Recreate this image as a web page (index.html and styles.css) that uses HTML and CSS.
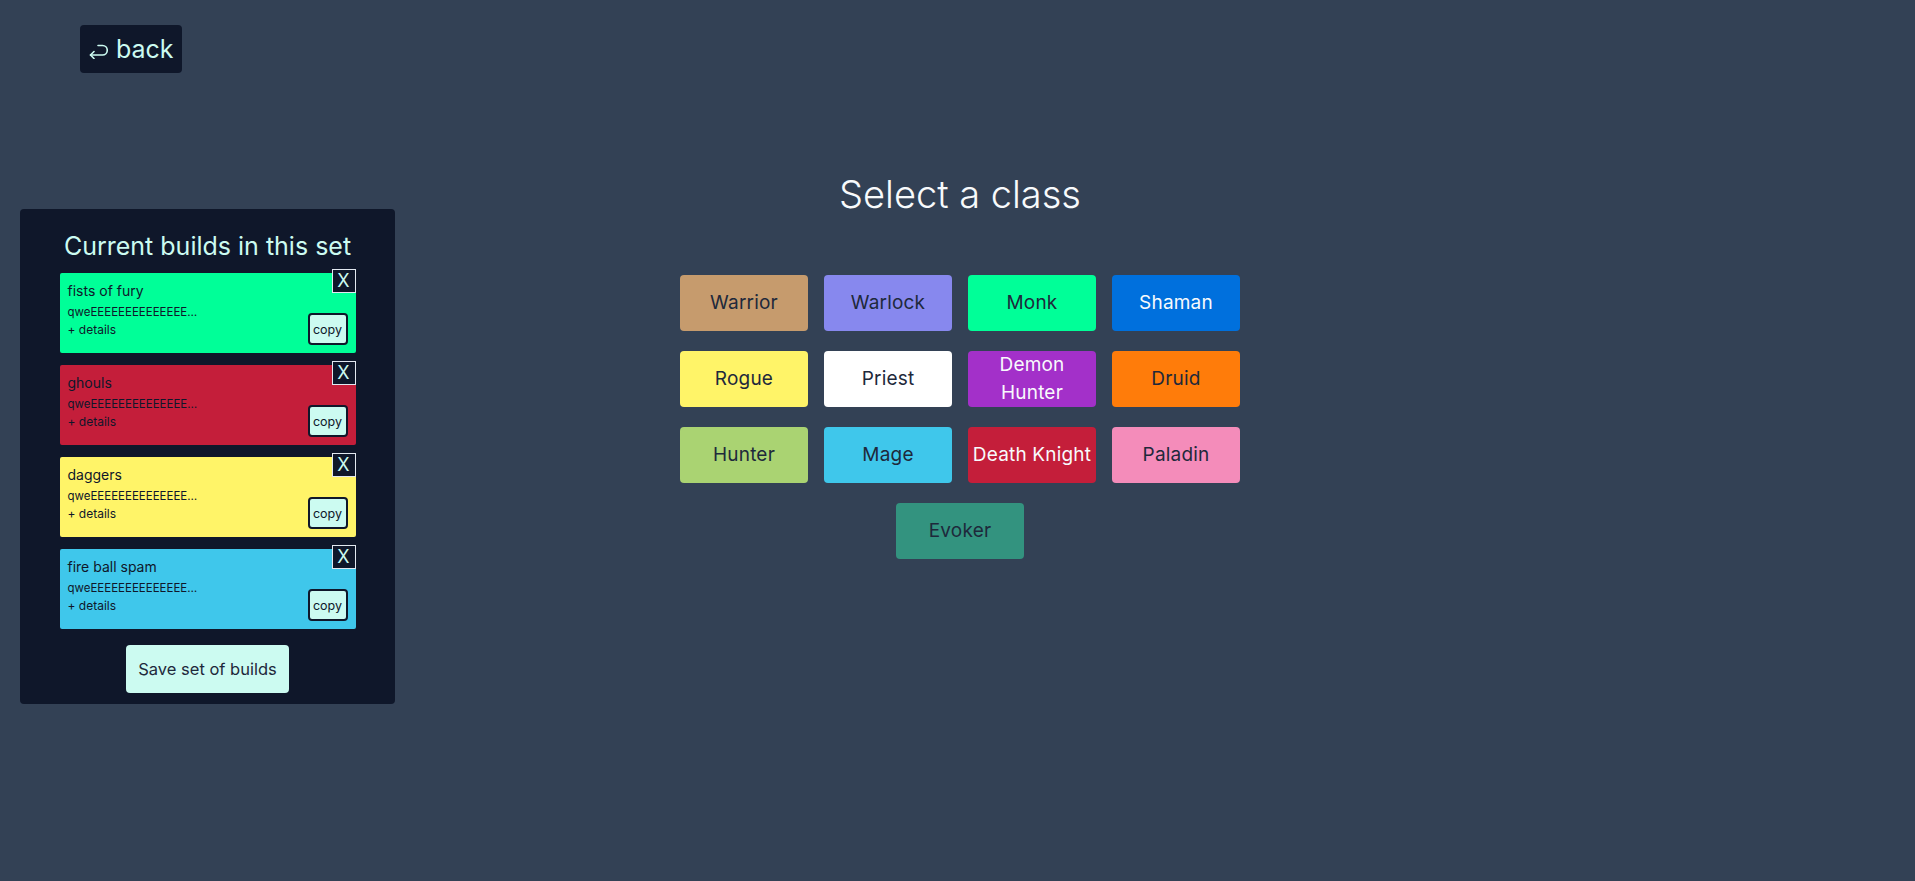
FILE: index.html
```html
<!DOCTYPE html>
<html lang="en">
<head>
<meta charset="utf-8">
<title>Select a class</title>
<link rel="stylesheet" href="styles.css">
</head>
<body>
<header class="topbar">
  <button class="back"><svg class="back-icon" viewBox="0 0 19 15" width="19" height="15" aria-hidden="true"><path d="M1.5 11 H13.5 A4.75 4.75 0 0 0 13.5 1.5 H9" fill="none" stroke="currentColor" stroke-width="1.6" stroke-linecap="round" stroke-linejoin="round"/><path d="M5 7.5 L1.5 11 L5 14.5" fill="none" stroke="currentColor" stroke-width="1.6" stroke-linecap="round" stroke-linejoin="round"/></svg><span>back</span></button>
</header>
<div class="layout">
  <aside class="panel">
    <h2 class="panel-title">Current builds in this set</h2>
    <ul class="builds">
      <li class="build c-monk">
        <div class="build-info">
          <p class="build-name">fists of fury</p>
          <p class="build-code">qweEEEEEEEEEEEEEE…</p>
          <p class="build-details">+ details</p>
        </div>
        <button class="copy">copy</button>
        <button class="remove">X</button>
      </li>
      <li class="build c-dk">
        <div class="build-info">
          <p class="build-name">ghouls</p>
          <p class="build-code">qweEEEEEEEEEEEEEE…</p>
          <p class="build-details">+ details</p>
        </div>
        <button class="copy">copy</button>
        <button class="remove">X</button>
      </li>
      <li class="build c-rogue">
        <div class="build-info">
          <p class="build-name">daggers</p>
          <p class="build-code">qweEEEEEEEEEEEEEE…</p>
          <p class="build-details">+ details</p>
        </div>
        <button class="copy">copy</button>
        <button class="remove">X</button>
      </li>
      <li class="build c-mage">
        <div class="build-info">
          <p class="build-name">fire ball spam</p>
          <p class="build-code">qweEEEEEEEEEEEEEE…</p>
          <p class="build-details">+ details</p>
        </div>
        <button class="copy">copy</button>
        <button class="remove">X</button>
      </li>
    </ul>
    <button class="save">Save set of builds</button>
  </aside>
  <main class="main">
    <h1 class="title">Select a class</h1>
    <div class="classes">
      <button class="class-btn c-warrior">Warrior</button>
      <button class="class-btn c-warlock">Warlock</button>
      <button class="class-btn c-monk">Monk</button>
      <button class="class-btn c-shaman light">Shaman</button>
      <button class="class-btn c-rogue">Rogue</button>
      <button class="class-btn c-priest">Priest</button>
      <button class="class-btn c-dh light">Demon Hunter</button>
      <button class="class-btn c-druid">Druid</button>
      <button class="class-btn c-hunter">Hunter</button>
      <button class="class-btn c-mage">Mage</button>
      <button class="class-btn c-dk light">Death Knight</button>
      <button class="class-btn c-paladin">Paladin</button>
      <button class="class-btn c-evoker">Evoker</button>
    </div>
  </main>
</div>
</body>
</html>
```
FILE: styles.css
```css
* { box-sizing: border-box; }

body {
  margin: 0;
  min-height: 100vh;
  background: #334155;
  font-family: Inter, "Open Sans", "DejaVu Sans", sans-serif;
  color: #0f172a;
}

button {
  font-family: inherit;
  cursor: pointer;
}

.topbar {
  padding: 25px 0 0 80px;
  height: 73px;
}

.back {
  height: 48px;
  width: 102px;
  padding: 8px 9px;
  border: 0;
  border-radius: 4px;
  background: #0f172a;
  color: #ccfbf1;
  font-size: 25px;
  line-height: 32px;
  font-weight: 400;
  display: flex;
  align-items: center;
  gap: 8px;
}

.back-icon {
  margin-top: 4px;
  flex: none;
}

.layout {
  display: grid;
  grid-template-columns: 395px 1fr 390px;
  align-items: start;
}

.panel {
  margin: 136px 0 0 20px;
  width: 375px;
  padding: 21px 0 11px;
  border-radius: 4px;
  background: #0f172a;
  display: flex;
  flex-direction: column;
  align-items: center;
}

.panel-title {
  margin: 0;
  font-size: 25px;
  line-height: 32px;
  font-weight: 400;
  color: #ccfbf1;
}

.builds {
  list-style: none;
  margin: 11px 0 0;
  padding: 0;
  width: 296px;
  display: flex;
  flex-direction: column;
  gap: 12px;
}

.build {
  position: relative;
  height: 80px;
  padding: 8px;
  border-radius: 2px;
  display: flex;
  justify-content: space-between;
  align-items: flex-end;
  color: #0f172a;
}

.build-info {
  align-self: flex-start;
}

.build-info p {
  margin: 0;
}

.build-name {
  font-size: 14px;
  line-height: 20px;
}

.build-code {
  margin-top: 3px !important;
  font-size: 11.5px;
  line-height: 16px;
}

.build-details {
  margin-top: 2px !important;
  font-size: 12px;
  line-height: 16px;
}

.copy {
  width: 40px;
  height: 32px;
  padding: 0;
  border: 2px solid #0f172a;
  border-radius: 4px;
  background: #ccfbf1;
  color: #0f172a;
  font-size: 12.5px;
}

.remove {
  position: absolute;
  top: -4px;
  right: 0;
  width: 24px;
  height: 24px;
  padding: 0;
  border: 1px solid #e2e8f0;
  background: #0f172a;
  color: #ccfbf1;
  font-size: 18px;
  line-height: 20px;
}

.save {
  margin-top: 16px;
  padding: 12px;
  border: 0;
  border-radius: 4px;
  background: #ccfbf1;
  color: #1e293b;
  font-size: 16.5px;
  line-height: 24px;
}

.main {
  display: flex;
  flex-direction: column;
  align-items: center;
}

.title {
  margin: 101px 0 0;
  font-size: 38px;
  line-height: 40px;
  font-weight: 300;
  color: #f8fafc;
}

.classes {
  margin-top: 61px;
  width: 560px;
  display: flex;
  flex-wrap: wrap;
  justify-content: center;
  gap: 20px 16px;
}

.class-btn {
  width: 128px;
  height: 56px;
  padding: 0;
  border: 0;
  border-radius: 4px;
  display: flex;
  align-items: center;
  justify-content: center;
  text-align: center;
  font-size: 19px;
  line-height: 28px;
  letter-spacing: 0.01em;
  color: #1e293b;
}

.class-btn.light { color: #f8fafc; }

.c-warrior { background: #c69b6d; }
.c-warlock { background: #8788ee; }
.c-monk { background: #00ff98; }
.c-shaman { background: #0070dd; }
.c-rogue { background: #fff468; }
.c-priest { background: #ffffff; }
.c-dh { background: #a330c9; }
.c-druid { background: #ff7c0a; }
.c-hunter { background: #aad372; }
.c-mage { background: #3fc7eb; }
.c-dk { background: #c41e3a; }
.c-paladin { background: #f48cba; }
.c-evoker { background: #33937f; }
```
